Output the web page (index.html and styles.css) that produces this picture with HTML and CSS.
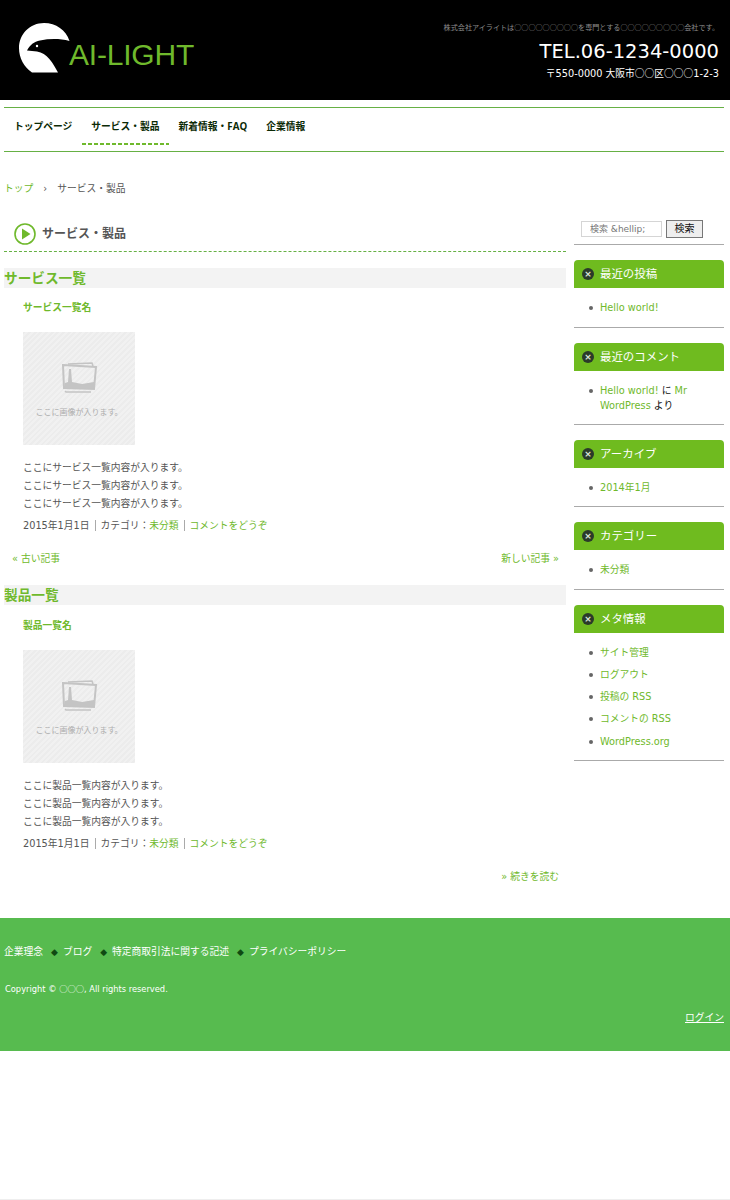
FILE: index.html
```html
<!DOCTYPE html>
<html lang="ja">
<head>
<meta charset="utf-8">
<title>AI-LIGHT</title>
<link rel="stylesheet" href="styles.css">
</head>
<body>
<header class="site-header">
  <a class="logo" href="#">
    <svg class="logo-mark" width="51" height="50" viewBox="0 0 51 50">
      <path fill="#fff" d="M50.500 18C47 7 37 0 25 0 11 0 0 11 0 25c0 10 5 19 13 24.500h26C34 40 28 30 18 28.500L8 27.500C11 22 15 18.500 21 17.500 31 15.500 41 15.500 50.500 18Z"/>
      <circle cx="18" cy="23" r="1.200" fill="#fff"/>
    </svg>
    <span class="logo-text">AI-LIGHT</span>
  </a>
  <div class="header-info">
    <p class="tagline">株式会社アイライトは○○○○○○○○○を専門とする○○○○○○○○○会社です。</p>
    <p class="tel">TEL.06-1234-0000</p>
    <p class="address">〒550-0000 大阪市<span class="maru">○○</span>区<span class="maru">○○○</span>1-2-3</p>
  </div>
</header>

<nav class="global-nav">
  <a class="nav-item" href="#">トップページ</a>
  <a class="nav-item is-active" href="#">サービス・製品</a>
  <a class="nav-item" href="#">新着情報・FAQ</a>
  <a class="nav-item" href="#">企業情報</a>
</nav>

<div class="breadcrumb"><a href="#">トップ</a><span class="sep">›</span><span>サービス・製品</span></div>

<div class="columns">
  <main class="main">
    <h1 class="page-title">
      <svg class="title-icon" width="22" height="22" viewBox="0 0 22 22">
        <circle cx="11" cy="11" r="10" fill="none" stroke="#6fb92c" stroke-width="1.600"/>
        <path fill="#6fb92c" d="M8 5.500 16.500 11 8 16.500Z"/>
      </svg>
      サービス・製品
    </h1>

    <section class="group">
      <h2 class="group-title">サービス一覧</h2>
      <article class="post">
        <h3 class="post-title"><a href="#">サービス一覧名</a></h3>
        <div class="placeholder">
          <svg class="ph-icon" width="38" height="32" viewBox="0 0 38 32">
            <path fill="none" stroke="#c4c4c4" stroke-width="1.500" d="M8 2 32 1l1 3M5 29l1 1 25 0"/>
            <path fill="none" stroke="#c4c4c4" stroke-width="2" d="M3 3 36 5 34 27 4 26Z"/>
            <path fill="#c4c4c4" d="M4 26 5 21 8 20 9 7 11 7 12 20 22 22 34 20 34 27Z"/>
          </svg>
          <span class="ph-text">ここに画像が入ります。</span>
        </div>
        <p class="post-line">ここにサービス一覧内容が入ります。</p>
        <p class="post-line">ここにサービス一覧内容が入ります。</p>
        <p class="post-line">ここにサービス一覧内容が入ります。</p>
        <p class="post-meta">2015年1月1日<span class="bar">カテゴリ：<a href="#">未分類</a></span><span class="bar"><a href="#">コメントをどうぞ</a></span></p>
      </article>
      <div class="pager"><a href="#">« 古い記事</a><a href="#">新しい記事 »</a></div>
    </section>

    <section class="group">
      <h2 class="group-title">製品一覧</h2>
      <article class="post">
        <h3 class="post-title"><a href="#">製品一覧名</a></h3>
        <div class="placeholder">
          <svg class="ph-icon" width="38" height="32" viewBox="0 0 38 32">
            <path fill="none" stroke="#c4c4c4" stroke-width="1.500" d="M8 2 32 1l1 3M5 29l1 1 25 0"/>
            <path fill="none" stroke="#c4c4c4" stroke-width="2" d="M3 3 36 5 34 27 4 26Z"/>
            <path fill="#c4c4c4" d="M4 26 5 21 8 20 9 7 11 7 12 20 22 22 34 20 34 27Z"/>
          </svg>
          <span class="ph-text">ここに画像が入ります。</span>
        </div>
        <p class="post-line">ここに製品一覧内容が入ります。</p>
        <p class="post-line">ここに製品一覧内容が入ります。</p>
        <p class="post-line">ここに製品一覧内容が入ります。</p>
        <p class="post-meta">2015年1月1日<span class="bar">カテゴリ：<a href="#">未分類</a></span><span class="bar"><a href="#">コメントをどうぞ</a></span></p>
      </article>
      <div class="pager pager-end"><a href="#">» 続きを読む</a></div>
    </section>
  </main>

  <aside class="sidebar">
    <form class="search">
      <input class="search-input" type="text" placeholder="検索 &amp;hellip;">
      <button class="search-btn" type="button">検索</button>
    </form>

    <section class="widget">
      <h4 class="widget-title"><span class="x-icon">×</span>最近の投稿</h4>
      <ul class="widget-list"><li><a href="#">Hello world!</a></li></ul>
    </section>
    <section class="widget">
      <h4 class="widget-title"><span class="x-icon">×</span>最近のコメント</h4>
      <ul class="widget-list"><li class="dark"><a href="#">Hello world!</a> に <a href="#">Mr WordPress</a> より</li></ul>
    </section>
    <section class="widget">
      <h4 class="widget-title"><span class="x-icon">×</span>アーカイブ</h4>
      <ul class="widget-list"><li><a href="#">2014年1月</a></li></ul>
    </section>
    <section class="widget">
      <h4 class="widget-title"><span class="x-icon">×</span>カテゴリー</h4>
      <ul class="widget-list"><li><a href="#">未分類</a></li></ul>
    </section>
    <section class="widget">
      <h4 class="widget-title"><span class="x-icon">×</span>メタ情報</h4>
      <ul class="widget-list">
        <li><a href="#">サイト管理</a></li>
        <li><a href="#">ログアウト</a></li>
        <li><a href="#">投稿の RSS</a></li>
        <li><a href="#">コメントの RSS</a></li>
        <li><a href="#">WordPress.org</a></li>
      </ul>
    </section>
  </aside>
</div>

<footer class="site-footer">
  <div class="footer-nav">
    <a href="#">企業理念</a><span class="dia">◆</span><a href="#">ブログ</a><span class="dia">◆</span><a href="#">特定商取引法に関する記述</a><span class="dia">◆</span><a href="#">プライバシーポリシー</a>
  </div>
  <p class="copyright">Copyright © <span class="maru">○○○</span>, All rights reserved.</p>
  <div class="login"><a href="#">ログイン</a></div>
</footer>
</body>
</html>
```
FILE: styles.css
```css
* { box-sizing: border-box; }
html, body { margin: 0; padding: 0; }
body {
  background: #fff;
  color: #555;
  font-family: "DejaVu Sans", "Noto Sans CJK JP", sans-serif;
  font-size: 9.750px;
  line-height: 18px;
  min-height: 1200px;
  border-bottom: 1px solid #eee;
}
a { color: #6fb92c; text-decoration: none; }
p, h1, h2, h3, h4, ul { margin: 0; padding: 0; }
.maru { font-family: "Noto Sans CJK JP", sans-serif; }

.site-header {
  background: #000;
  height: 100px;
  display: flex;
  justify-content: space-between;
  padding: 23px 11px 0 19px;
}
.logo { display: flex; align-items: flex-start; }
.logo-mark { flex: none; }
.logo-text {
  font-family: "Liberation Sans", sans-serif;
  font-size: 30px;
  line-height: 36px;
  letter-spacing: -0.2px;
  color: #6fb92c;
  margin: 14px 0 0 -1px;
}
.header-info { text-align: right; }
.tagline { color: #8d8d8d; font-family: "Noto Sans CJK JP", sans-serif; font-size: 7.100px; line-height: 8px; }
.tel { color: #fff; font-size: 19.500px; line-height: 24px; margin-top: 9px; }
.address { color: #fff; font-size: 9.750px; line-height: 14px; margin-top: 2px; }

.global-nav {
  margin: 7px 6px 0 4px;
  height: 45px;
  border-top: 1px solid #66b044;
  border-bottom: 1px solid #66b044;
  display: flex;
}
.nav-item {
  color: #0b2a05;
  font-family: "Open Sans", "Noto Sans CJK JP", sans-serif;
  font-weight: 700;
  line-height: 14px;
  padding: 12px 9.500px 0;
  height: 37px;
}
.nav-item:first-child { padding-left: 10px; }
.is-active {
  background: repeating-linear-gradient(90deg, #6fb92c 0 4px, transparent 4px 6px) left bottom / 100% 2px no-repeat;
}

.breadcrumb { margin: 28px 0 0 4px; }
.breadcrumb .sep { margin: 0 10px; }

.columns { display: flex; margin: 21px 6px 0 4px; gap: 8px; }
.main { width: 562px; flex: none; }
.sidebar { width: 150px; flex: none; }

.page-title {
  display: flex;
  align-items: center;
  gap: 6px;
  height: 33px;
  padding: 0 0 2px 10px;
  font-size: 12px;
  font-weight: 700;
  color: #555;
  border-bottom: 1px dashed #66b044;
}
.title-icon { flex: none; }

.group { margin-top: 17px; }
.page-title + .group { margin-top: 16px; }
.group-title {
  background: #f3f3f3;
  color: #6fb92c;
  font-size: 13.650px;
  line-height: 20px;
  font-weight: 700;
}
.post { padding: 0 0 0 19px; }
.post-title { font-size: 9.750px; line-height: 18px; font-weight: 700; margin-top: 11px; }
.group + .group .post-title { margin-top: 12px; }
.placeholder {
  width: 112px;
  height: 113px;
  margin: 15px 0 14px;
  background: repeating-linear-gradient(135deg, #ececec 0 2px, #f1f1f1 2px 4px);
  display: flex;
  flex-direction: column;
  align-items: center;
  padding-top: 30px;
}
.ph-text { color: #aeaeae; font-size: 8px; line-height: 12px; margin-top: 13px; }
.post-line { line-height: 18px; }
.post-meta { margin-top: 4px; line-height: 18px; }
.bar { border-left: 1px solid #aaa; margin-left: 6px; padding-left: 4px; }

.pager { display: flex; justify-content: space-between; padding: 0 7px 0 8px; margin-top: 15px; }
.pager-end { justify-content: flex-end; }

.search {
  display: flex;
  align-items: center;
  gap: 4px;
  padding: 1px 0 7px 7px;
  border-bottom: 1px solid #aaa;
  height: 26px;
}
.search-input {
  width: 81px;
  height: 16px;
  border: 1px solid #d5d5d5;
  padding: 0 8px;
  font-size: 9px;
  font-family: "DejaVu Sans", "Noto Sans CJK JP", sans-serif;
}
.search-input::placeholder { color: #777; opacity: 1; }
.search-btn {
  width: 37px;
  height: 18px;
  padding: 0;
  background: #eee;
  border: 1px solid #777;
  font-size: 10px;
  line-height: 14px;
  color: #111;
  font-family: "DejaVu Sans", "Noto Sans CJK JP", sans-serif;
}

.widget { margin-top: 15px; border-bottom: 1px solid #aaa; padding-bottom: 11px; }
.widget-title {
  background: #6fbb1f;
  color: #fff;
  height: 28px;
  font-size: 11.440px;
  line-height: 28px;
  font-weight: 400;
  display: flex;
  align-items: center;
  padding-left: 8px;
  border-radius: 4px 4px 0 0;
}
.x-icon {
  width: 12px;
  height: 12px;
  border-radius: 50%;
  background: #2b3a2a;
  color: #dfe6da;
  font-size: 9px;
  line-height: 12px;
  text-align: center;
  margin-right: 6px;
  flex: none;
  font-weight: 700;
}
.widget-list { list-style: none; padding: 12px 10px 0 26px; }
.widget-list li { line-height: 15.600px; color: #111; position: relative; }
.widget-list li + li { margin-top: 6.650px; }
.widget-list li::before {
  content: "";
  position: absolute;
  left: -11px;
  top: 6px;
  width: 4px;
  height: 4px;
  border-radius: 50%;
  background: #666;
}
.widget-list li.dark { line-height: 15px; }

.site-footer {
  background: #57bb4f;
  margin-top: 32px;
  height: 133px;
  color: #fff;
  padding: 25px 6px 0 4px;
}
.site-footer a { color: #fff; }
.footer-nav { line-height: 18px; }
.dia { color: #0f4a12; font-size: 9px; margin: 0 5px 0 8px; }
.copyright { font-size: 8.300px; line-height: 14px; margin-top: 20px; padding-left: 1px; }
.login { text-align: right; margin-top: 14px; line-height: 16px; }
.login a { text-decoration: underline; }
```
